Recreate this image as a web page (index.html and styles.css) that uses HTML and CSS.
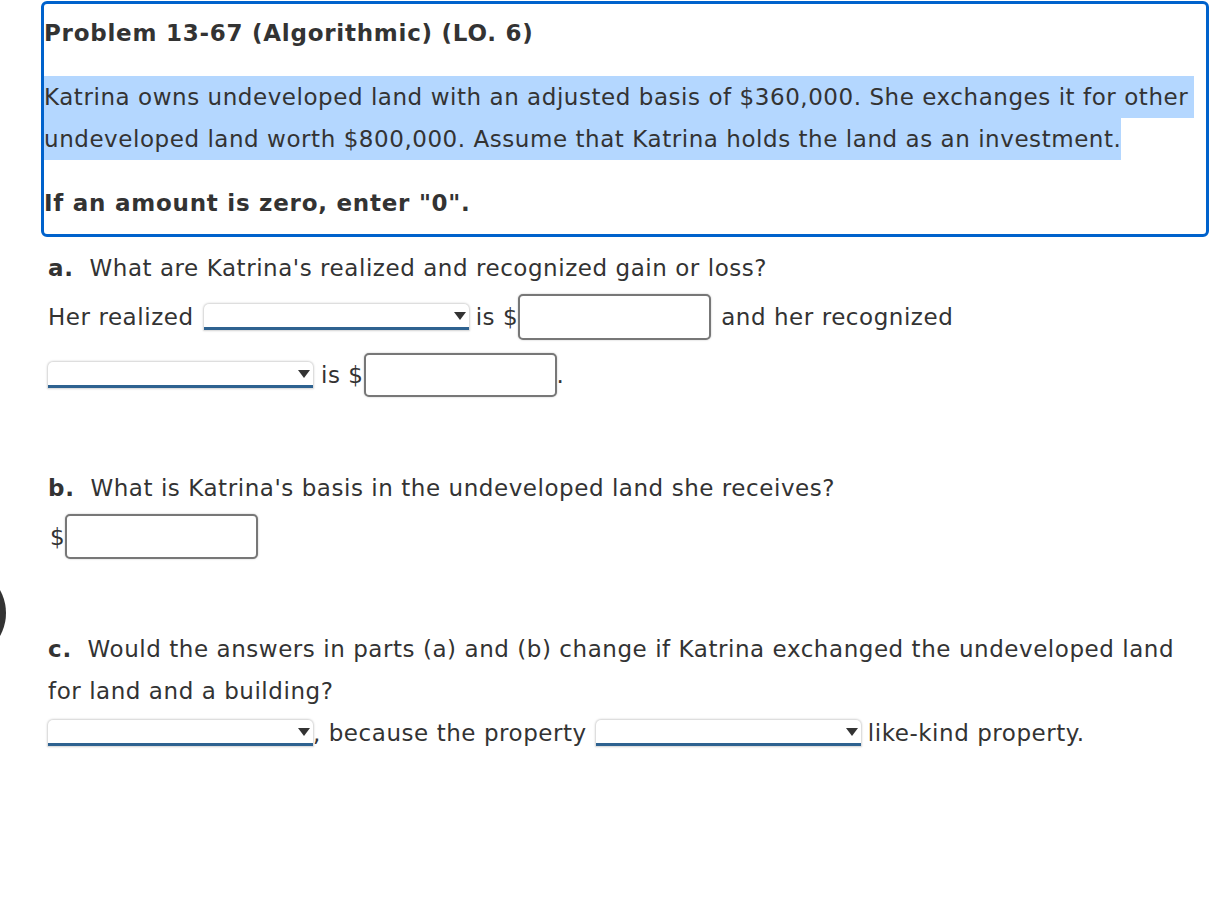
FILE: index.html
```html
<!DOCTYPE html>
<html>
<head>
<meta charset="utf-8">
<link rel="stylesheet" href="styles.css">
</head>
<body>
<div class="dot"></div>
<div class="page">
  <div class="box">
    <div class="title">Problem 13-67 (Algorithmic) (LO. 6)</div>
    <div class="hl first">Katrina owns undeveloped land with an adjusted basis of $360,000. She exchanges it for other</div>
    <div class="hl">undeveloped land worth $800,000. Assume that Katrina holds the land as an investment.</div>
    <div class="note">If an amount is zero, enter "0".</div>
  </div>

  <div class="q qa"><b>a.</b>&nbsp; What are Katrina's realized and recognized gain or loss?</div>
  <div class="row r1">
    <span class="t">Her realized</span>
    <span class="sel s-gap"></span>
    <span class="t is">is $</span>
    <span class="inp"></span>
    <span class="t after">and her recognized</span>
  </div>
  <div class="row r2">
    <span class="sel"></span>
    <span class="t is2">is $</span>
    <span class="inp"></span>
    <span class="t">.</span>
  </div>

  <div class="q qb"><b>b.</b>&nbsp; What is Katrina's basis in the undeveloped land she receives?</div>
  <div class="row rb">
    <span class="t dollar">$</span>
    <span class="inp"></span>
  </div>

  <div class="q qc"><b>c.</b>&nbsp; Would the answers in parts (a) and (b) change if Katrina exchanged the undeveloped land<br>for land and a building?</div>
  <div class="row rc">
    <span class="sel"></span>
    <span class="t">, because the property</span>
    <span class="sel s-gap2"></span>
    <span class="t is">like-kind property.</span>
  </div>
</div>
</body>
</html>
```

FILE: styles.css
```css
html, body {
  margin: 0;
  padding: 0;
  background: #fff;
}
body {
  font-family: "DejaVu Sans", Verdana, sans-serif;
  font-size: 23px;
  letter-spacing: 0.55px;
  color: #333;
  width: 1230px;
  height: 910px;
  overflow: hidden;
  position: relative;
}
b, .title, .note {
  font-weight: bold;
  letter-spacing: 0.75px;
}
.dot {
  position: absolute;
  left: -88px;
  top: 566px;
  width: 94px;
  height: 94px;
  border-radius: 50%;
  background: #333;
}
.page {
  padding-left: 48px;
  padding-top: 1px;
}
.box {
  margin-left: -7px;
  width: 1162px;
  border: 3px solid #0062cc;
  border-radius: 6px;
  padding: 8px 0 10px 0;
  line-height: 42px;
}
.title {
  margin-bottom: 22px;
}
.hl {
  background: #b4d7ff;
  width: fit-content;
}
.hl.first {
  padding-right: 6px;
}
.note {
  margin-top: 22px;
}
.q {
  line-height: 42px;
}
.qa { margin-top: 10px; }
.row {
  display: flex;
  align-items: center;
  height: 46px;
}
.r1 { margin-top: 5px; }
.r2 { margin-top: 13px; height: 44px; }
.qb { margin-top: 70px; }
.rb { margin-top: 5px; height: 45px; }
.qc { margin-top: 69px; }
.rc { height: 42px; }
.t {
  white-space: pre;
  line-height: 26px;
}
.sel {
  position: relative;
  display: block;
  width: 265px;
  height: 26px;
  box-sizing: border-box;
  background: #fff;
  border-radius: 5px 5px 0 0;
  box-shadow: 0 0 2px 1px rgba(0,0,0,0.18);
  border-bottom: 3px solid #2e6290;
}
.sel::after {
  content: "";
  position: absolute;
  right: 3px;
  top: 8px;
  border-left: 6px solid transparent;
  border-right: 6px solid transparent;
  border-top: 8px solid #333;
}
.s-gap { margin-left: 10px; }
.s-gap2 { margin-left: 9px; }
.is { margin-left: 7px; }
.is2 { margin-left: 8px; }
.after { margin-left: 10px; }
.dollar { margin-left: 2px; }
.inp {
  display: block;
  width: 193px;
  height: 100%;
  box-sizing: border-box;
  border: 2px solid #777;
  border-radius: 5px;
  box-shadow: 0 0 2px rgba(0,0,0,0.25);
  background: #fff;
}
```
